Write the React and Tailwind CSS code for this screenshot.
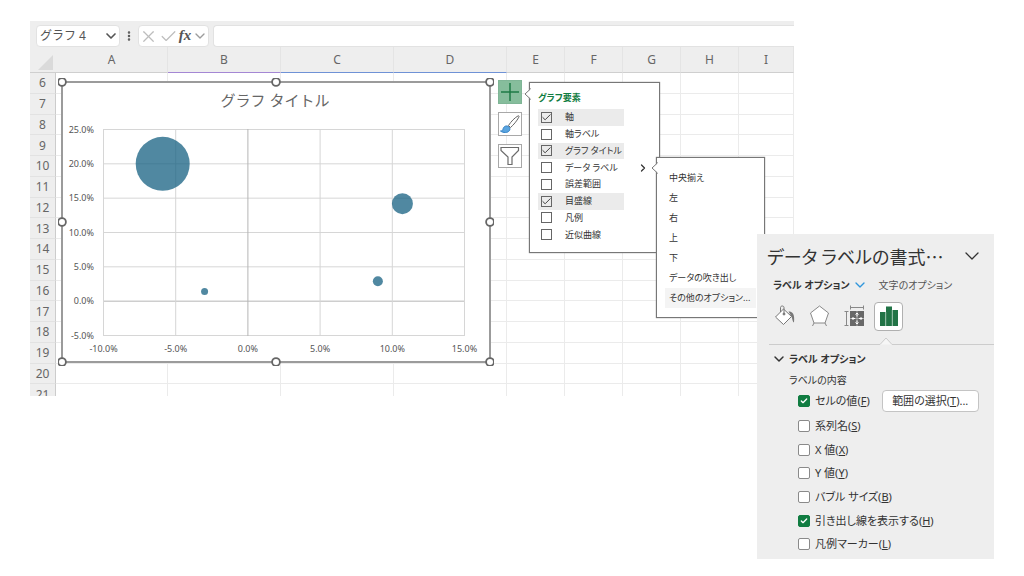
import React from 'react';
import { Check, ChevronDown, ChevronRight, EllipsisVertical, X } from 'lucide-react';

const columns = [
    { name: 'A', width: 'w-[112px]', line: 'border-b-[#cfcfcf]' },
    { name: 'B', width: 'w-[113px]', line: 'border-b-[#a487d4]' },
    { name: 'C', width: 'w-[113px]', line: 'border-b-[#6f92d6]' },
    { name: 'D', width: 'w-[113px]', line: 'border-b-[#6f92d6]' },
    { name: 'E', width: 'w-[58px]', line: 'border-b-[#cfcfcf]' },
    { name: 'F', width: 'w-[58px]', line: 'border-b-[#cfcfcf]' },
    { name: 'G', width: 'w-[58px]', line: 'border-b-[#cfcfcf]' },
    { name: 'H', width: 'w-[58px]', line: 'border-b-[#cfcfcf]' },
    { name: 'I', width: '', line: 'border-b-[#cfcfcf]' },
];

const rows = [6, 7, 8, 9, 10, 11, 12, 13, 14, 15, 16, 17, 18, 19, 20, 21];

const yTicks = ['25.0%', '20.0%', '15.0%', '10.0%', '5.0%', '0.0%', '-5.0%'];
const xTicks = ['-10.0%', '-5.0%', '0.0%', '5.0%', '10.0%', '15.0%'];

const bubbles = [
    { x: -5.9, y: 20, r: 27 },
    { x: 10.7, y: 14.2, r: 10.5 },
    { x: 9, y: 2.9, r: 5 },
    { x: -3, y: 1.4, r: 3.5 },
];

const chartElements = [
    { label: '軸', checked: true },
    { label: '軸ラベル', checked: false },
    { label: 'グラフ タイトル', checked: true },
    { label: 'データ ラベル', checked: false, submenu: true },
    { label: '誤差範囲', checked: false },
    { label: '目盛線', checked: true },
    { label: '凡例', checked: false },
    { label: '近似曲線', checked: false },
];

const labelPositions = ['中央揃え', '左', '右', '上', '下', 'データの吹き出し', 'その他のオプション...'];

const labelContents = [
    { label: '系列名', hotkey: 'S', checked: false },
    { label: 'X 値', hotkey: 'X', checked: false },
    { label: 'Y 値', hotkey: 'Y', checked: false },
    { label: 'バブル サイズ', hotkey: 'B', checked: false },
    { label: '引き出し線を表示する', hotkey: 'H', checked: true },
    { label: '凡例マーカー', hotkey: 'L', checked: false },
];

const Toolbar = () => (
    <div className="flex h-[26px] items-end bg-[#eeeeee] pl-[6px] text-[#555555]">
        <div className="flex h-[22px] w-[84px] items-center rounded-sm border border-[#e2e2e2] bg-white pl-[3px]">
            <input
                aria-label="名前ボックス"
                defaultValue="グラフ 4"
                className="w-full min-w-0 bg-transparent text-xs text-[#555555] outline-none [font-feature-settings:normal]"
            />
            <button aria-label="名前の一覧">
                <ChevronDown className="size-4" strokeWidth={2.5} />
            </button>
        </div>
        <div className="flex h-[22px] w-[18px] items-center justify-center">
            <EllipsisVertical className="size-3" strokeWidth={3} />
        </div>
        <div className="flex h-[22px] w-[71px] items-center justify-between rounded-sm border border-[#e2e2e2] bg-white">
            <button aria-label="キャンセル">
                <X className="size-[19px] text-[#bdbdbd]" strokeWidth={1.5} />
            </button>
            <button aria-label="入力">
                <Check className="size-[19px] text-[#bdbdbd]" strokeWidth={1.5} />
            </button>
            <button aria-label="関数の挿入" className="pb-[2px] font-['Liberation_Serif',serif] text-[15px] leading-4 font-bold italic">
                fx
            </button>
            <button aria-label="関数の一覧">
                <ChevronDown className="size-4 text-[#9c9c9c]" strokeWidth={2} />
            </button>
        </div>
        <input
            aria-label="数式バー"
            className="ml-1 h-[22px] min-w-0 flex-1 rounded-l-sm border border-r-0 border-[#e2e2e2] bg-white outline-none"
        />
    </div>
);

const Sheet = () => (
    <table className="h-[358px] w-full table-fixed border-separate border-spacing-0 text-xs leading-4 text-[#666666]">
        <thead>
            <tr className="h-[26px] bg-[#eeeeee]">
                <th className="w-[26px] border-b border-[#cfcfcf] p-0 align-bottom">
                    <svg viewBox="0 0 26 18" className="h-[18px] w-[26px]">
                        <path d="M23 1V16H8Z" fill="#dadada" />
                    </svg>
                </th>
                {columns.map((col) => (
                    <th key={col.name} scope="col" className={`border-r border-b border-r-[#e4e4e4] p-0 font-normal ${col.width} ${col.line}`}>
                        {col.name}
                    </th>
                ))}
            </tr>
        </thead>
        <tbody>
            {rows.map((row) => (
                <tr key={row}>
                    <th scope="row" className="border-r border-b border-r-[#cccccc] border-b-[#e2e2e2] bg-[#eeeeee] px-0 pt-px pb-0 font-normal">
                        {row}
                    </th>
                    {columns.map((col) => (
                        <td key={col.name} className="border-r border-b border-[#ebebeb] p-0" />
                    ))}
                </tr>
            ))}
        </tbody>
    </table>
);

// plot area spans x 45..406 and y 51..257 inside the 436x288 drawing
const px = (value) => 45.5 + ((value + 10) / 25) * 361;
const py = (value) => 257.5 - ((value + 5) / 30) * 206;

const BubbleChart = () => (
    <svg viewBox="0 0 436 288" className="h-[288px] w-[436px] shrink-0">
        <rect x="4" y="4" width="428" height="280" fill="#ffffff" stroke="#9b9b9b" strokeWidth="2" />
        <text x="217" y="28" textAnchor="middle" fontSize="15" fill="#666666" className="[font-feature-settings:normal]">
            グラフ タイトル
        </text>
        {yTicks.map((tick, i) => (
            <g key={tick}>
                <line x1="45" x2="407" y1={py(25 - i * 5)} y2={py(25 - i * 5)} stroke={tick === '0.0%' ? '#b5b5b5' : '#d6d6d6'} />
                <text x="36" y={py(25 - i * 5) + 3} textAnchor="end" fontSize="9" fill="#555555">{tick}</text>
            </g>
        ))}
        {xTicks.map((tick, i) => (
            <g key={tick}>
                <line x1={px(i * 5 - 10)} x2={px(i * 5 - 10)} y1="51" y2="258" stroke={tick === '0.0%' ? '#b5b5b5' : '#d6d6d6'} />
                <text x={px(i * 5 - 10)} y="274" textAnchor="middle" fontSize="9" fill="#555555">{tick}</text>
            </g>
        ))}
        {bubbles.map((b) => (
            <circle key={b.r} cx={px(b.x)} cy={py(b.y)} r={b.r} fill="#156082" fillOpacity="0.75" />
        ))}
        {[4, 218, 432].map((x) =>
            [4, 144, 284].map((y) =>
                x === 218 && y === 144 ? null : (
                    <circle key={`${x}-${y}`} cx={x} cy={y} r="3.9" fill="#ffffff" stroke="#666666" strokeWidth="1.8" />
                )
            )
        )}
    </svg>
);

const ChartButtons = () => (
    <div className="mt-[2px] ml-1 flex shrink-0 flex-col gap-2">
        <button aria-label="グラフ要素" className="size-6 border border-[#7fb596] bg-[#86bd9c]">
            <svg viewBox="0 0 22 22" className="size-[22px]" stroke="#1e7b45" strokeWidth="1.5">
                <path d="M11 2V20M2 11H20" />
            </svg>
        </button>
        <button aria-label="グラフ スタイル" className="size-6 border border-[#a8a8a8] bg-white">
            <svg viewBox="0 0 22 22" className="size-[22px]" fill="none">
                <path d="M9.5 12.5C12 8.5 16 4.5 19.2 2.8C20.2 2.6 20.2 3.4 19.8 4.2C17.8 8 14.5 12 11.5 14.5Z" stroke="#666666" fill="#ffffff" />
                <path d="M1.5 18C3.5 18 3.8 17 4.2 15.5C5 12.8 8.500 12 10.3 14.3C12 16.8 9.800 19.500 6.500 19.500C4.500 19.500 2.800 19 1.500 18Z" fill="#5aa5e0" stroke="#2f7fc4" />
            </svg>
        </button>
        <button aria-label="グラフ フィルター" className="size-6 border border-[#a8a8a8] bg-white">
            <svg viewBox="0 0 22 22" className="size-[22px]" fill="none" stroke="#6b6b6b" strokeWidth="1.2">
                <path d="M2 2.5H19.5V5.5L13 12V19.5H9V12L2 5.5Z" />
            </svg>
        </button>
    </div>
);

const MenuPointer = () => (
    <svg viewBox="0 0 7 14" className="absolute -left-[6px] h-[14px] w-[7px]">
        <path d="M7 1.5L1 7L7 12.5" fill="#ffffff" stroke="#777777" />
        <path d="M6.5 2.5V11.5" stroke="#ffffff" />
    </svg>
);

const LabelMenu = () => (
    <div className="absolute top-0 left-[118px] z-10 flex h-[161px] w-[109px] flex-col border border-[#777777] bg-white px-2 pt-[10px] pb-[9px] shadow-[0_0_1px_#777777]">
        <div className="absolute top-[3px] left-0">
            <MenuPointer />
        </div>
        {labelPositions.map((label) => (
            <button
                key={label}
                className="flex flex-1 items-center pl-1 text-left text-[9px] leading-3 whitespace-nowrap last:bg-[#f4f4f4]"
            >
                {label}
            </button>
        ))}
    </div>
);

const ChartElementsMenu = () => (
    <div className="relative mt-1 ml-[7px] flex h-[171px] w-[131px] shrink-0 flex-col border border-[#777777] bg-white text-[#333333] shadow-[0_0_1px_#777777]">
        <div className="absolute top-1 left-0">
            <MenuPointer />
        </div>
        <h2 className="mt-[9px] pl-2 text-[9px] leading-3 font-bold text-[#107c41]">グラフ要素</h2>
        <div className="mt-[5px] flex h-[134px] flex-col pl-2">
            {chartElements.map((item) => (
                <div key={item.label} className="relative flex flex-1 items-center">
                    <label className={`flex h-full w-[86px] items-center pl-[3px] text-[9px] leading-3 whitespace-nowrap ${item.checked ? 'bg-[#ebebeb]' : ''}`}>
                        <span className="mr-[13px] grid">
                            <input
                                type="checkbox"
                                defaultChecked={item.checked}
                                className="col-start-1 row-start-1 size-[11px] appearance-none border border-[#666666]"
                            />
                            {item.checked && <Check className="pointer-events-none col-start-1 row-start-1 size-[11px]" strokeWidth={2} />}
                        </span>
                        {item.label}
                    </label>
                    {item.submenu && (
                        <>
                            <ChevronRight className="ml-[13px] size-3" strokeWidth={2.5} />
                            <div className="absolute -top-[2px] left-0">
                                <LabelMenu />
                            </div>
                        </>
                    )}
                </div>
            ))}
        </div>
    </div>
);

const PaneCheckbox = ({ label, hotkey, checked }) => (
    <label className="flex items-center gap-[5px] text-[11px] leading-4 whitespace-nowrap">
        <span className="grid">
            <input
                type="checkbox"
                defaultChecked={checked}
                className="col-start-1 row-start-1 size-3 appearance-none rounded-xs border border-[#8a8a8a] bg-white checked:border-[#107c41] checked:bg-[#107c41]"
            />
            {checked && <Check className="pointer-events-none col-start-1 row-start-1 size-3 p-[2px] text-white" strokeWidth={4} />}
        </span>
        <span>
            {label}(<u>{hotkey}</u>)
        </span>
    </label>
);

const FormatPane = () => (
    <aside className="absolute top-[234px] right-[30px] z-20 h-[325px] w-[237px] bg-[#eeeeee] text-[#333333]">
        <div className="flex items-center justify-between pt-[10px] pr-[10px] pl-[10px]">
            <h1 className="font-['Noto_Sans_CJK_JP',sans-serif] text-lg leading-6 whitespace-nowrap">データ ラベルの書式…</h1>
            <button aria-label="作業ウィンドウのオプション">
                <ChevronDown className="size-6" strokeWidth={1.3} />
            </button>
        </div>
        <div className="mt-[9px] flex items-center pl-4 text-[10px] leading-4 whitespace-nowrap">
            <button className="flex items-center gap-[2px] font-bold">
                ラベル オプション
                <ChevronDown className="size-4 text-[#2f96dc]" strokeWidth={2} />
            </button>
            <button className="ml-[11px] text-[#555555]">文字のオプション</button>
        </div>
        <div className="mt-2 flex h-[30px] items-center pl-[17px]">
            <button aria-label="塗りつぶしと線">
                <svg viewBox="0 0 22 22" className="size-[22px]" fill="none" stroke="#777777">
                    <path d="M9.5 4L17.5 11.5L9.5 19.5L1.5 12Z" fill="#ffffff" />
                    <path d="M6.5 7V2.5C6.5 0.5 10 0.5 10 2.5V9" />
                    <circle cx="10" cy="9" r="1" fill="#777777" />
                    <path d="M14.5 6.500C18.500 6.500 21 9 20 17.500C18.500 17 18.500 14 17.500 11.500Z" fill="#777777" stroke="none" />
                </svg>
            </button>
            <button aria-label="効果" className="ml-[13px]">
                <svg viewBox="0 0 22 22" className="size-[22px]" fill="none" stroke="#888888">
                    <path d="M10.5 1L19.5 8L16 18H5L1.5 8Z" fill="#ffffff" />
                    <path d="M5 18L3.5 21M16 18L17.5 21" />
                </svg>
            </button>
            <button aria-label="サイズとプロパティ" className="ml-[13px]">
                <svg viewBox="0 0 22 22" className="size-[22px]" fill="none" stroke="#888888">
                    <path d="M6.5 2.5H19.5M6.5 0.5V4.5M19.5 0.5V4.5M2.5 6.5V20M0.5 6.5H4.5M0.5 20.5H4.5" />
                    <rect x="6" y="6" width="14" height="15" fill="#686868" stroke="none" />
                    <path d="M13 6V21M6 13.5H20" stroke="#a8a8a8" />
                    <path d="M13 8V11.5M13 15.500V19M8 13.5H11M15 13.5H18M11.500 9.500L13 8L14.500 9.500M11.500 17.500L13 19L14.500 17.500M9.500 12L8 13.500L9.500 15M16.500 12L18 13.500L16.500 15" stroke="#ffffff" />
                </svg>
            </button>
            <button aria-label="ラベル オプション" className="ml-[8px] flex size-[29px] items-center justify-center rounded-sm border border-[#b0b0b0] bg-white">
                <svg viewBox="0 0 20 20" className="size-5" fill="#217346">
                    <path d="M1 6H6.500V20H1ZM7 0.5H13V20H7ZM13.500 4H19V20H13.500Z" />
                    <path d="M6.8 6V20M13.2 4V20" stroke="#8fbda3" strokeWidth="0.7" />
                </svg>
            </button>
        </div>
        <div className="flex h-[14px] items-end pl-3">
            <span className="h-px w-[110px] bg-[#cccccc]" />
            <svg viewBox="0 0 14 8" className="h-2 w-[14px]" fill="#f6f6f6" stroke="#cccccc">
                <path d="M0 7.5H1L7 1L13 7.5H14" />
            </svg>
            <span className="h-px flex-1 bg-[#cccccc]" />
        </div>
        <h2 className="mt-[6px] flex items-center gap-[2px] pl-[14px] text-[10px] leading-4 font-bold">
            <ChevronDown className="size-4" strokeWidth={2.2} />
            ラベル オプション
        </h2>
        <p className="mt-[5px] pl-8 text-[10px] leading-4">ラベルの内容</p>
        <div className="mt-[2px] flex h-[22px] items-center pl-[41px]">
            <PaneCheckbox label="セルの値" hotkey="F" checked />
            <button className="ml-3 h-[22px] w-[97px] rounded-sm border border-[#c4c4c4] bg-white text-[11px] leading-4 whitespace-nowrap">
                範囲の選択(<u>T</u>)...
            </button>
        </div>
        <div className="mt-[2px] flex h-[142px] flex-col pl-[41px] *:flex-1">
            {labelContents.map((item) => (
                <PaneCheckbox key={item.hotkey} {...item} />
            ))}
        </div>
    </aside>
);

const App = () => (
    <main
        lang="ja"
        className="relative min-h-screen bg-white pt-[21px] pl-[30px] font-['Noto_Sans','Noto_Sans_CJK_JP',sans-serif] [font-feature-settings:'palt']"
    >
        <section className="mr-[230px] h-[375px] overflow-hidden">
            <Toolbar />
            <div className="relative">
                <Sheet />
                <div className="absolute top-[31px] left-[28px] flex items-start">
                    <BubbleChart />
                    <ChartButtons />
                    <ChartElementsMenu />
                </div>
            </div>
        </section>
        <FormatPane />
    </main>
);

export default App;
